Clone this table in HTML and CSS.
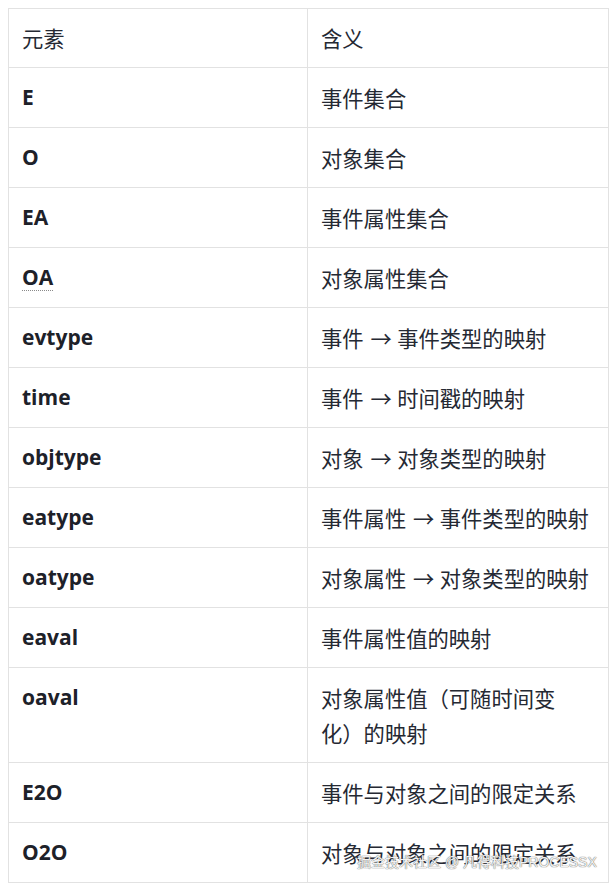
FILE: index.html
```html
<!DOCTYPE html>
<html lang="zh-CN">
<head>
<meta charset="utf-8">
<title>元素与含义</title>
<link rel="stylesheet" href="styles.css">
</head>
<body>
<div class="page">
<table class="defs">
  <colgroup><col class="c1"><col class="c2"></colgroup>
  <thead>
    <tr><th>元素</th><th>含义</th></tr>
  </thead>
  <tbody>
    <tr><td class="key"><strong>E</strong></td><td>事件集合</td></tr>
    <tr><td class="key"><strong>O</strong></td><td>对象集合</td></tr>
    <tr><td class="key"><strong>EA</strong></td><td>事件属性集合</td></tr>
    <tr><td class="key"><strong class="abbr">OA</strong></td><td>对象属性集合</td></tr>
    <tr><td class="key"><strong>evtype</strong></td><td>事件 <span class="arr">→</span> 事件类型的映射</td></tr>
    <tr><td class="key"><strong>time</strong></td><td>事件 <span class="arr">→</span> 时间戳的映射</td></tr>
    <tr><td class="key"><strong>objtype</strong></td><td>对象 <span class="arr">→</span> 对象类型的映射</td></tr>
    <tr><td class="key"><strong>eatype</strong></td><td>事件属性 <span class="arr">→</span> 事件类型的映射</td></tr>
    <tr><td class="key"><strong>oatype</strong></td><td>对象属性 <span class="arr">→</span> 对象类型的映射</td></tr>
    <tr><td class="key"><strong>eaval</strong></td><td>事件属性值的映射</td></tr>
    <tr><td class="key"><strong>oaval</strong></td><td>对象属性值（可随时间变化）的映射</td></tr>
    <tr><td class="key"><strong>E2O</strong></td><td>事件与对象之间的限定关系</td></tr>
    <tr><td class="key"><strong>O2O</strong></td><td>对象与对象之间的限定关系</td></tr>
  </tbody>
</table>
<div class="watermark">掘金技术社区 @ 凡得科技PROCESSX</div>
</div>
</body>
</html>
```

FILE: styles.css
```css
html, body {
  margin: 0;
  padding: 0;
  background: #ffffff;
}

body {
  font-family: "Noto Sans CJK SC", sans-serif;
  color: #252933;
}

.page {
  position: relative;
  padding: 8px 0 0 8px;
  width: 615px;
  height: 888px;
  box-sizing: border-box;
}

.defs {
  border-collapse: collapse;
  table-layout: fixed;
  width: 600px;
  font-size: 21.3px;
  line-height: 35px;
  text-spacing-trim: space-all;
}

.defs .c1 { width: 299px; }
.defs .c2 { width: 301px; }

.defs th,
.defs td {
  border: 1px solid #e2e2e2;
  padding: 12px 18px 12px 13px;
  height: 35px;
  text-align: left;
  vertical-align: top;
  font-weight: 400;
  font-family: "Noto Sans CJK SC", sans-serif;
}

.defs thead th {
  padding-top: 11px;
  padding-bottom: 12px;
}

.defs td.key {
  font-family: "Open Sans", "Noto Sans", sans-serif;
  font-size: 21px;
}

.defs strong {
  font-family: "Open Sans", "Noto Sans", sans-serif;
  font-weight: 700;
  color: #1d2129;
}

.defs .abbr {
  text-decoration: underline dotted #8a8a8a;
  text-underline-offset: 5px;
  text-decoration-thickness: 1px;
}

.arr {
  display: inline-block;
  width: 20px;
  text-align: center;
  margin: 0 2px;
}

.watermark {
  position: absolute;
  left: 357px;
  top: 852px;
  font-family: "Liberation Sans", "Noto Sans CJK SC", sans-serif;
  font-size: 14px;
  line-height: 20px;
  color: rgba(255, 255, 255, 0.92);
  text-shadow: 0 0 1px #707070, 0 0 1px #707070;
  white-space: nowrap;
}
```
